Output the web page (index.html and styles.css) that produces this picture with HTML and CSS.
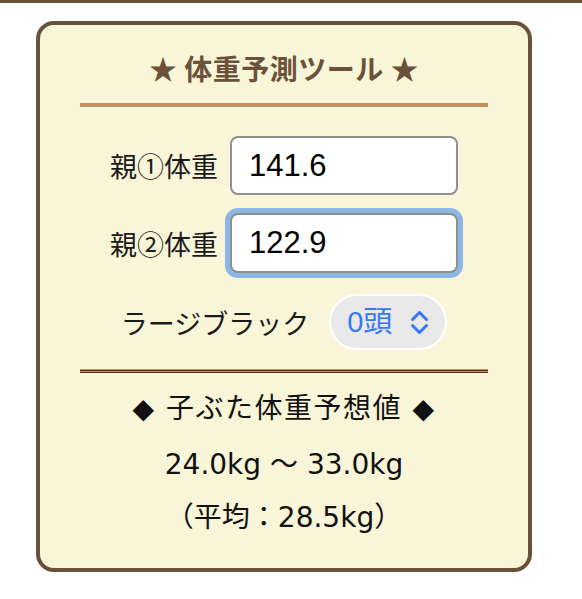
FILE: index.html
```html
<!DOCTYPE html>
<html lang="ja">
<head>
    <meta charset="UTF-8">
    <meta name="viewport" content="width=device-width, initial-scale=1.0">
    <title>体重予測ツール</title>
    <link rel="stylesheet" href="styles.css">
</head>
<body>
    <div class="topbar"></div>
    <div class="tool">
        <h2 class="title">★ 体重予測ツール ★</h2>
        <div class="rule"></div>
        <div class="row">
            <label for="parent1">親①体重</label>
            <input type="text" id="parent1" value="141.6">
        </div>
        <div class="row second">
            <label for="parent2">親②体重</label>
            <input type="text" id="parent2" class="active" value="122.9">
        </div>
        <div class="row third">
            <label for="lb">ラージブラック</label>
            <div class="pick">
                <select id="lb">
                    <option>0頭</option>
                    <option>1頭</option>
                    <option>2頭</option>
                </select>
                <svg width="19" height="25" viewBox="0 0 19 25">
                    <path d="M2.5 9.5 L9.5 2.5 L16.5 9.5 M2.5 15.5 L9.5 22.5 L16.5 15.5" fill="none" stroke="#3478f6" stroke-width="3" stroke-linecap="round" stroke-linejoin="round"/>
                </svg>
            </div>
        </div>
        <div class="double"></div>
        <p class="result head">◆ 子ぶた体重予想値 ◆</p>
        <p class="result range" id="range">24.0kg 〜 33.0kg</p>
        <p class="result avg" id="avg">（平均：28.5kg）</p>
    </div>
</body>
</html>
```

FILE: styles.css
```css
body {
    margin: 0;
    background-color: white;
    font-family: "Noto Sans CJK JP", sans-serif;
}
.topbar {
    height: 3px;
    background-color: #6b5139;
}
.tool {
    width: 496px;
    margin: 18px 0 0 36px;
    padding: 24px 40px 32px;
    box-sizing: border-box;
    background-color: #f9f5d8;
    border: 4px solid #6b5139;
    border-radius: 18px;
}
.title {
    margin: 0;
    font-size: 28px;
    line-height: 38px;
    font-weight: bold;
    letter-spacing: 0.5px;
    color: #6b5139;
    text-align: center;
}
.rule {
    height: 4px;
    margin-top: 16px;
    background-color: #c09262;
}
.row {
    display: flex;
    align-items: center;
    justify-content: center;
    gap: 12px;
    margin-top: 29px;
}
.row.second {
    margin-top: 18px;
}
.row.third {
    margin-top: 21px;
    gap: 20px;
}
label {
    font-size: 27px;
    color: #1a1a1a;
}
input {
    width: 228px;
    height: 59px;
    box-sizing: border-box;
    padding: 0 17px;
    border: 2px solid #8f8f8f;
    border-radius: 8px;
    background-color: white;
    font-family: "Liberation Sans", sans-serif;
    font-size: 31px;
    color: black;
    outline: none;
}
input.active {
    height: 60px;
    box-shadow: 0 0 0 5px #8cb6e6;
}
.pick {
    display: flex;
    align-items: center;
    gap: 17px;
    width: 118px;
    height: 56px;
    box-sizing: border-box;
    padding: 0 16px 0 16px;
    border: 2px solid white;
    border-radius: 28px;
    background-color: #e9e9e9;
}
.pick select {
    appearance: none;
    border: none;
    background: transparent;
    padding: 0;
    width: 46px;
    font-family: "Liberation Sans", "Noto Sans CJK JP", sans-serif;
    font-size: 29px;
    color: #3478f6;
    outline: none;
}
.double {
    height: 4px;
    margin-top: 19px;
    background: linear-gradient(#c09262 0 1px, #4a2e16 1px 2px, #c09262 2px 3px, #4a2e16 3px 4px);
}
.result {
    margin: 18px 0 0;
    font-family: "DejaVu Sans", "Noto Sans CJK JP", sans-serif;
    font-size: 28px;
    line-height: 36px;
    color: #111;
    text-align: center;
}
.result.head {
    letter-spacing: 1.5px;
}
.result.range {
    margin-top: 20px;
}
.result.avg {
    margin-top: 17px;
}
```
